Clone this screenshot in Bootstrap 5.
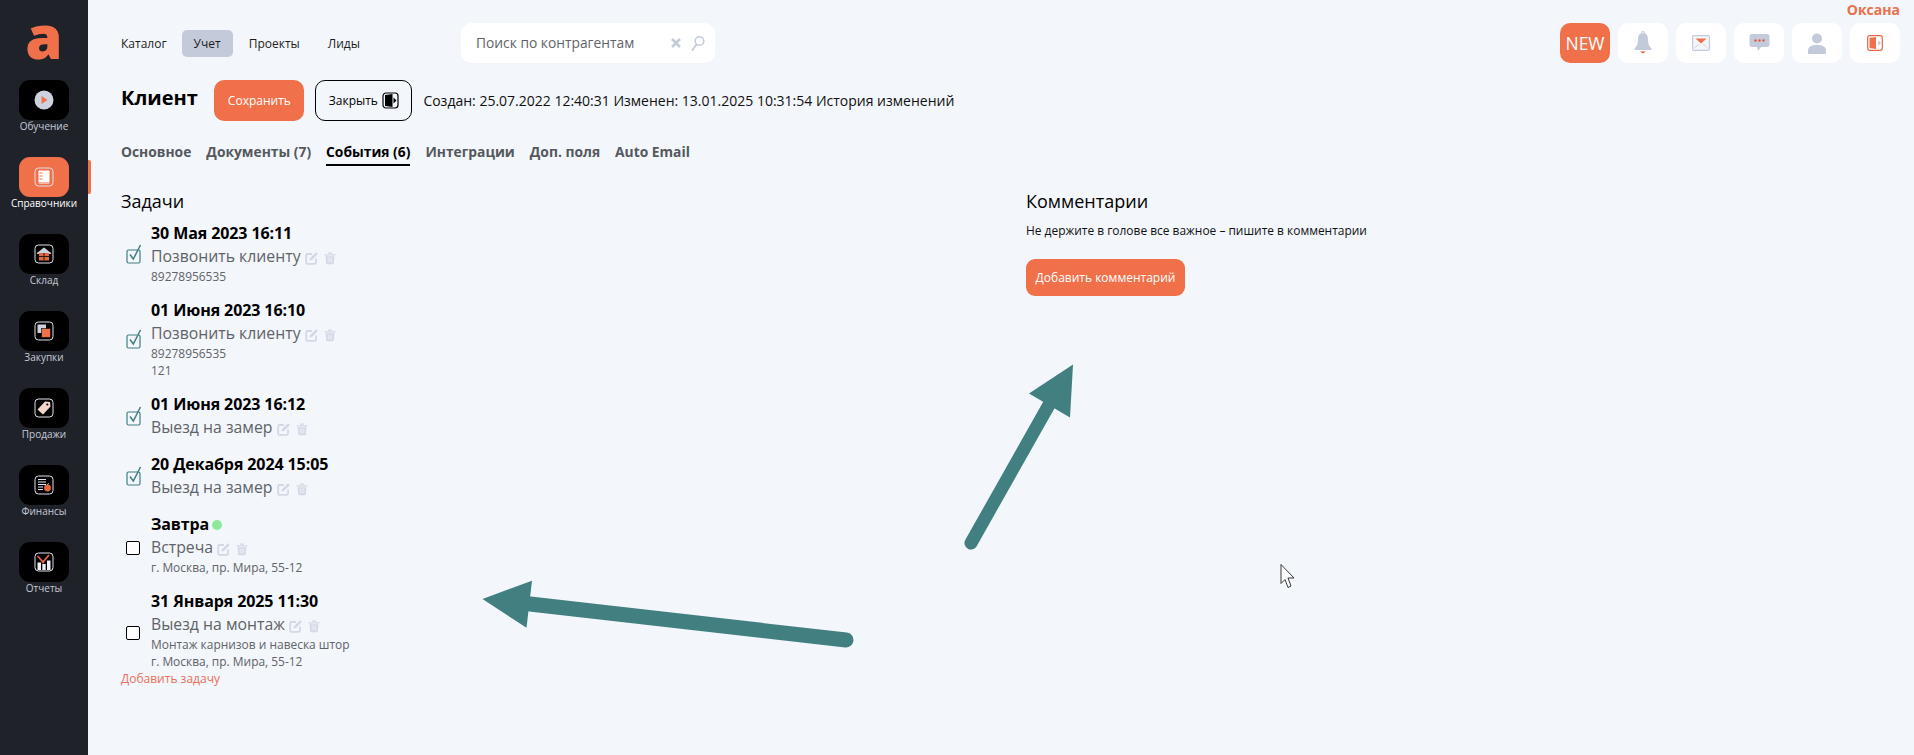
<!DOCTYPE html>
<html lang="ru">
<head>
  <meta charset="UTF-8" />
  <meta name="viewport" content="width=device-width, initial-scale=1" />
  <title>Клиент</title>
  <link href="https://cdn.jsdelivr.net/npm/bootstrap@5.3.0/dist/css/bootstrap.min.css" rel="stylesheet" />
  <style>
    body {
      background: #f3f6fb;
      font-family: "Open Sans", sans-serif;
      color: #000;
      min-height: 755px;
      overflow: hidden;
    }
    .side-bar {
      width: 88px;
      background: #20222a;
      flex-shrink: 0;
    }
    .logo-mark {
      height: 80px;
      color: #f0704a;
      font-size: 60px;
      font-weight: 800;
      line-height: 72px;
      text-align: center;
    }
    .side-item {
      height: 77px;
      color: #c4cad8;
      font-size: 10px;
      line-height: 13px;
      text-decoration: none;
      position: relative;
    }
    .side-tile {
      width: 50px;
      height: 40px;
      background: #000;
      border-radius: 11px;
      margin-bottom: 0;
    }
    .side-item.is-active { color: #fff; }
    .side-item.is-active .side-tile { background: #f0704a; }
    .side-item.is-active::after {
      content: "";
      position: absolute;
      left: 88px;
      top: 3px;
      width: 3px;
      height: 34px;
      background: #f0704a;
      border-radius: 0 2px 2px 0;
    }
    .content-area {
      padding: 0 14px 0 33px;
      min-width: 0;
    }
    .user-line {
      height: 23px;
      color: #e9704a;
      font-size: 14px;
      font-weight: 700;
      line-height: 20px;
      text-align: right;
    }
    .top-row { height: 40px; }
    .top-link {
      color: #1c1c1c;
      font-size: 12px;
      line-height: 27px;
      height: 27px;
      padding: 0 12px;
      border-radius: 5px;
      text-decoration: none;
    }
    .top-link.is-current { background: #c3cbdb; }
    .top-links {
      margin-left: -12px;
      gap: 4px;
    }
    .top-link:first-child { margin-right: -1px; }
    .search-box {
      width: 254px;
      height: 40px;
      margin-left: 89px;
      background: #fff;
      border-radius: 10px;
      padding: 0 10px 0 15px;
      color: #5f6368;
      font-size: 13.8px;
    }
    .tool-tile {
      width: 50px;
      height: 40px;
      background: #fff;
      border-radius: 10px;
    }
    .tool-new {
      background: #f0704a;
      color: #fff;
      font-size: 17.5px;
    }
    .title-row {
      margin-top: 17px;
      height: 41px;
    }
    .page-title {
      font-size: 20px;
      font-weight: 700;
      line-height: 36px;
      margin: 0 16.5px 5px 0;
    }
    .save-btn {
      background: #f0704a;
      color: #fff;
      border: 0;
      border-radius: 10px;
      font-size: 12px;
      font-weight: 500;
      height: 41px;
      width: 90px;
      padding: 0;
    }
    .close-btn {
      background: transparent;
      color: #000;
      border: 1px solid #000;
      border-radius: 10px;
      font-size: 12px;
      height: 41px;
      width: 97px;
      margin-left: 11px;
      padding: 0;
    }
    .meta-line {
      font-size: 14px;
      margin-left: 11px;
      color: #111;
    }
    .tab-row {
      margin-top: 21px;
      gap: 15px;
    }
    .tab-link {
      color: #55585d;
      font-size: 13.82px;
      font-weight: 700;
      line-height: 19px;
      padding-bottom: 3px;
      border-bottom: 2px solid transparent;
      text-decoration: none;
    }
    .tab-link.is-current {
      color: #000;
      border-bottom-color: #000;
    }
    .work-row { margin-top: 23px; }
    .task-col { width: 905px; }
    .block-title {
      font-size: 18px;
      font-weight: 400;
      line-height: 24px;
      margin: 0;
    }
    .task-list { margin-top: 9px; }
    .task-item {
      padding-left: 5px;
      margin-bottom: 14px;
      gap: 9px;
    }
    .task-item:last-of-type { margin-bottom: 0; }
    .task-check { width: 16px; flex-shrink: 0; }
    .task-box.form-check-input {
      width: 14px;
      height: 14px;
      margin: 6px 0 0;
      border: 1.5px solid #000;
      border-radius: 2px;
      background-color: #fff;
    }
    .task-date {
      font-size: 16px;
      font-weight: 700;
      line-height: 22px;
      letter-spacing: -.1px;
    }
    .task-name {
      color: #5f6368;
      font-size: 15.8px;
      line-height: 24px;
    }
    .task-note {
      color: #5f6368;
      font-size: 11.95px;
      line-height: 17px;
    }
    .green-dot {
      display: inline-block;
      width: 10px;
      height: 10px;
      margin-left: 3px;
      background: #8fe89a;
      border-radius: 50%;
    }
    .add-task {
      color: #e9705a;
      font-size: 12px;
      line-height: 17px;
      text-decoration: none;
    }
    .comment-hint {
      font-size: 11.95px;
      line-height: 17px;
      margin: 9px 0 0;
      color: #111;
    }
    .comment-btn {
      background: #f0704a;
      color: #fff;
      border: 0;
      border-radius: 9px;
      font-size: 12px;
      font-weight: 500;
      height: 37px;
      width: 159px;
      margin-top: 20px;
      padding: 0;
    }
    .overlay-art {
      position: absolute;
      left: 0;
      top: 0;
      pointer-events: none;
    }
  </style>
</head>
<body class="position-relative">

  <svg width="0" height="0" class="position-absolute">
    <symbol id="edit-ic" viewBox="0 0 14 14">
      <path d="M11 7.500V11.500a1.300 1.300 0 0 1-1.300 1.300H2.500a1.300 1.300 0 0 1-1.300-1.300V4.300A1.300 1.300 0 0 1 2.500 3H7" fill="none" stroke="#d3d8e5" stroke-width="1.800"/>
      <path d="M4.500 9.500l.5-2.300L11 1.200l1.900 1.900-6 6z" fill="#d3d8e5"/>
    </symbol>
    <symbol id="trash-ic" viewBox="0 0 14 14">
      <path d="M1.500 3.200h11v1.300h-11zM5 1.500h4v1.200H5z" fill="#d3d8e5"/>
      <path d="M2.600 5.200h8.800l-.6 7.100a1 1 0 0 1-1 .9H4.200a1 1 0 0 1-1-.9z" fill="#d3d8e5"/>
      <path d="M5.200 6.500v5M7 6.500v5M8.800 6.500v5" stroke="#f3f6fb" stroke-width=".8"/>
    </symbol>
    <symbol id="done-ic" viewBox="0 0 16 20">
      <rect x="1" y="6" width="13" height="13" rx="1.500" fill="none" stroke="#417f80" stroke-width="1.200"/>
      <path d="M4 10.500l3.300 4.500L14.500 1" fill="none" stroke="#417f80" stroke-width="1.500"/>
    </symbol>
    <symbol id="frame-ic" viewBox="0 0 20 20">
      <rect x="1" y="1" width="18" height="18" rx="3.500" fill="none" stroke="#dfe3ec" stroke-width="1"/>
    </symbol>
  </svg>

  <div class="d-flex">
    <aside class="side-bar d-flex flex-column align-items-center vh-100">
      <div class="logo-mark w-100">a</div>

      <a class="side-item w-100 d-flex flex-column align-items-center" href="#">
        <span class="side-tile d-flex align-items-center justify-content-center">
          <svg width="20" height="20" viewBox="0 0 20 20"><circle cx="10" cy="10" r="9.500" fill="#cdd2de"/><path d="M7.500 6l6 4-6 4z" fill="#f0704a"/></svg>
        </span>
        Обучение
      </a>
      <a class="side-item is-active w-100 d-flex flex-column align-items-center" href="#">
        <span class="side-tile d-flex align-items-center justify-content-center">
          <svg width="20" height="20" viewBox="0 0 20 20"><use href="#frame-ic"/><path d="M4.500 3.500h11v11.500h-11z" fill="#fff"/><path d="M4.500 15.500h11v1h-11z" fill="#fff"/><path d="M5.500 6h3M5.500 9h3M5.500 12h3" stroke="#f0704a" stroke-width="1"/></svg>
        </span>
        Справочники
      </a>
      <a class="side-item w-100 d-flex flex-column align-items-center" href="#">
        <span class="side-tile d-flex align-items-center justify-content-center">
          <svg width="20" height="20" viewBox="0 0 20 20"><use href="#frame-ic"/><path d="M3 9l7-5.500L17 9v1H3z" fill="#cdd2de"/><rect x="5" y="9" width="10" height="7.500" fill="#e5673f"/><path d="M10 9v7.500M5 12.500h10" stroke="#2a1a14" stroke-width="1"/></svg>
        </span>
        Склад
      </a>
      <a class="side-item w-100 d-flex flex-column align-items-center" href="#">
        <span class="side-tile d-flex align-items-center justify-content-center">
          <svg width="20" height="20" viewBox="0 0 20 20"><use href="#frame-ic"/><rect x="3.500" y="3.500" width="8.500" height="8.500" fill="#cdd2de"/><rect x="7.500" y="7.500" width="9" height="9" fill="#f0704a" stroke="#000" stroke-width=".6"/></svg>
        </span>
        Закупки
      </a>
      <a class="side-item w-100 d-flex flex-column align-items-center" href="#">
        <span class="side-tile d-flex align-items-center justify-content-center">
          <svg width="20" height="20" viewBox="0 0 20 20"><use href="#frame-ic"/><path d="M11 3.500l5 .5.5 4.500-7.500 8-5.500-5z" fill="#f4d6cb"/><circle cx="13.300" cy="6.500" r="1.100" fill="#000"/></svg>
        </span>
        Продажи
      </a>
      <a class="side-item w-100 d-flex flex-column align-items-center" href="#">
        <span class="side-tile d-flex align-items-center justify-content-center">
          <svg width="20" height="20" viewBox="0 0 20 20"><use href="#frame-ic"/><path d="M4 4.500h8M4 7h8M4 9.500h8M4 12h5M4 14.500h5" stroke="#dfe3ec" stroke-width="1.200"/><circle cx="13.500" cy="13" r="3.400" fill="#e5673f"/><path d="M13.500 9.800l1-1.500" stroke="#dfe3ec" stroke-width="1"/></svg>
        </span>
        Финансы
      </a>
      <a class="side-item w-100 d-flex flex-column align-items-center" href="#">
        <span class="side-tile d-flex align-items-center justify-content-center">
          <svg width="20" height="20" viewBox="0 0 20 20"><use href="#frame-ic"/><path d="M3.500 10.500h3.500V18H3.500zM8.300 12h3.400v6H8.300zM13 8.500h3.500V18H13z" fill="#eef0f5"/><path d="M3.500 4l5.500 6 6-7" fill="none" stroke="#e5673f" stroke-width="1.800"/><circle cx="9" cy="10" r="1.400" fill="#e5673f"/></svg>
        </span>
        Отчеты
      </a>
    </aside>

    <main class="content-area flex-grow-1">
      <div class="user-line">Оксана</div>

      <div class="top-row d-flex align-items-center justify-content-between">
        <div class="d-flex align-items-center">
          <nav class="top-links d-flex">
            <a class="top-link" href="#">Каталог</a>
            <a class="top-link is-current" href="#">Учет</a>
            <a class="top-link" href="#">Проекты</a>
            <a class="top-link" href="#">Лиды</a>
          </nav>
          <div class="search-box d-flex align-items-center">
            <span class="flex-grow-1">Поиск по контрагентам</span>
            <svg width="12" height="12" viewBox="0 0 12 12" class="me-2"><path d="M2 2l8 8M10 2l-8 8" stroke="#c3cbdb" stroke-width="2.600"/></svg>
            <svg width="15" height="17" viewBox="0 0 15 17"><circle cx="9.500" cy="6" r="4.300" fill="none" stroke="#c3cbdb" stroke-width="1.600"/><path d="M6.500 9.500L2 15.500" stroke="#c3cbdb" stroke-width="1.800"/></svg>
          </div>
        </div>

        <div class="d-flex gap-2">
          <div class="tool-tile tool-new d-flex align-items-center justify-content-center">NEW</div>
          <div class="tool-tile d-flex align-items-center justify-content-center">
            <svg width="20" height="26" viewBox="0 0 20 26"><path d="M8.500 3a1.500 1.500 0 0 1 3 0" fill="none" stroke="#c3cbdb" stroke-width="1.200"/><path d="M10 3c3.600 0 5 2.800 5 6 0 5 1.200 7 3.500 9.500v1.500h-17v-1.500C3.800 16 5 14 5 9c0-3.200 1.400-6 5-6z" fill="#c3cbdb"/><path d="M7 21.500h6L10 23.500z" fill="#e5573f"/></svg>
          </div>
          <div class="tool-tile d-flex align-items-center justify-content-center">
            <svg width="18" height="16" viewBox="0 0 18 16"><rect x=".6" y=".6" width="16.800" height="14.800" rx="1.500" fill="#f5f6f9" stroke="#c3cbdb" stroke-width="1.200"/><path d="M3.500 3.500h11L9 8.500z" fill="#f0704a"/><path d="M2.500 13l4.500-4M15.500 13l-4.500-4" stroke="#c3cbdb" stroke-width=".8"/></svg>
          </div>
          <div class="tool-tile d-flex align-items-center justify-content-center">
            <svg width="21" height="20" viewBox="0 0 21 20"><path d="M3 1h15a2.500 2.500 0 0 1 2.500 2.500v8A2.500 2.500 0 0 1 18 14h-6l-3 4-1-4H3A2.500 2.500 0 0 1 .5 11.500v-8A2.500 2.500 0 0 1 3 1z" fill="#c3cbdb"/><circle cx="6.500" cy="7.500" r="1.200" fill="#e5573f"/><circle cx="10.500" cy="7.500" r="1.200" fill="#e5573f"/><circle cx="14.500" cy="7.500" r="1.200" fill="#e5573f"/></svg>
          </div>
          <div class="tool-tile d-flex align-items-center justify-content-center">
            <svg width="18" height="21" viewBox="0 0 18 21"><circle cx="9" cy="5.500" r="5" fill="#c3cbdb"/><path d="M0 21v-3.500C0 14 3 12 9 12s9 2 9 5.500V21z" fill="#c3cbdb"/></svg>
          </div>
          <div class="tool-tile d-flex align-items-center justify-content-center">
            <svg width="16" height="16" viewBox="0 0 16 16"><rect x=".7" y=".7" width="14.600" height="14.600" rx="2" fill="none" stroke="#e5673f" stroke-width="1.200"/><path d="M2.500 3l6.500-1v12l-6.500-1z" fill="#f0704a"/><path d="M11 5l3 3-3 3z" fill="#c3cbdb"/></svg>
          </div>
        </div>
      </div>

      <div class="title-row d-flex align-items-center">
        <h1 class="page-title">Клиент</h1>
        <button class="save-btn" type="button">Сохранить</button>
        <button class="close-btn d-inline-flex align-items-center justify-content-center gap-1" type="button">
          Закрыть
          <svg width="17" height="17" viewBox="0 0 17 17"><rect x="1" y="1" width="15" height="15" rx="3" fill="none" stroke="#000" stroke-width="1.200"/><path d="M3 3l7.500-1v13L3 14z" fill="#000"/><path d="M11.500 5.500l3 3-3 3z" fill="#000"/></svg>
        </button>
        <div class="meta-line">Создан: 25.07.2022 12:40:31 Изменен: 13.01.2025 10:31:54 История изменений</div>
      </div>

      <div class="tab-row d-flex">
        <a class="tab-link" href="#">Основное</a>
        <a class="tab-link" href="#">Документы (7)</a>
        <a class="tab-link is-current" href="#">События (6)</a>
        <a class="tab-link" href="#">Интеграции</a>
        <a class="tab-link" href="#">Доп. поля</a>
        <a class="tab-link" href="#">Auto Email</a>
      </div>

      <div class="work-row d-flex">
        <section class="task-col">
          <h2 class="block-title">Задачи</h2>
          <div class="task-list">
            <div class="task-item d-flex align-items-center">
              <span class="task-check"><svg width="16" height="20" class="d-block"><use href="#done-ic"/></svg></span>
              <div>
                <div class="task-date">30 Мая 2023 16:11</div>
                <div class="task-name">Позвонить клиенту <svg width="14" height="14"><use href="#edit-ic"/></svg> <svg width="14" height="14"><use href="#trash-ic"/></svg></div>
                <div class="task-note">89278956535</div>
              </div>
            </div>
            <div class="task-item d-flex align-items-center">
              <span class="task-check"><svg width="16" height="20" class="d-block"><use href="#done-ic"/></svg></span>
              <div>
                <div class="task-date">01 Июня 2023 16:10</div>
                <div class="task-name">Позвонить клиенту <svg width="14" height="14"><use href="#edit-ic"/></svg> <svg width="14" height="14"><use href="#trash-ic"/></svg></div>
                <div class="task-note">89278956535</div>
                <div class="task-note">121</div>
              </div>
            </div>
            <div class="task-item d-flex align-items-center">
              <span class="task-check"><svg width="16" height="20" class="d-block"><use href="#done-ic"/></svg></span>
              <div>
                <div class="task-date">01 Июня 2023 16:12</div>
                <div class="task-name">Выезд на замер <svg width="14" height="14"><use href="#edit-ic"/></svg> <svg width="14" height="14"><use href="#trash-ic"/></svg></div>
              </div>
            </div>
            <div class="task-item d-flex align-items-center">
              <span class="task-check"><svg width="16" height="20" class="d-block"><use href="#done-ic"/></svg></span>
              <div>
                <div class="task-date">20 Декабря 2024 15:05</div>
                <div class="task-name">Выезд на замер <svg width="14" height="14"><use href="#edit-ic"/></svg> <svg width="14" height="14"><use href="#trash-ic"/></svg></div>
              </div>
            </div>
            <div class="task-item d-flex align-items-center">
              <span class="task-check"><input class="task-box form-check-input d-block" type="checkbox" /></span>
              <div>
                <div class="task-date">Завтра<span class="green-dot"></span></div>
                <div class="task-name">Встреча <svg width="14" height="14"><use href="#edit-ic"/></svg> <svg width="14" height="14"><use href="#trash-ic"/></svg></div>
                <div class="task-note">г. Москва, пр. Мира, 55-12</div>
              </div>
            </div>
            <div class="task-item d-flex align-items-center">
              <span class="task-check"><input class="task-box form-check-input d-block" type="checkbox" /></span>
              <div>
                <div class="task-date">31 Января 2025 11:30</div>
                <div class="task-name">Выезд на монтаж <svg width="14" height="14"><use href="#edit-ic"/></svg> <svg width="14" height="14"><use href="#trash-ic"/></svg></div>
                <div class="task-note">Монтаж карнизов и навеска штор</div>
                <div class="task-note">г. Москва, пр. Мира, 55-12</div>
              </div>
            </div>
            <a class="add-task d-block" href="#">Добавить задачу</a>
          </div>
        </section>

        <section>
          <h2 class="block-title">Комментарии</h2>
          <p class="comment-hint">Не держите в голове все важное – пишите в комментарии</p>
          <button class="comment-btn" type="button">Добавить комментарий</button>
        </section>
      </div>
    </main>
  </div>

  <!-- hand-drawn arrows and the mouse pointer sit on top of the page -->
  <svg class="overlay-art" width="1914" height="755" viewBox="0 0 1914 755">
    <path d="M846 640L530 604" stroke="#417f80" stroke-width="15" stroke-linecap="round" fill="none"/>
    <path d="M482.500 599L532 580.700 526.500 627.700z" fill="#417f80"/>
    <path d="M971 543L1050 403" stroke="#417f80" stroke-width="13" stroke-linecap="round" fill="none"/>
    <path d="M1073 364.500L1029 393.500 1070 417.500z" fill="#417f80"/>
    <path d="M1281 564.500v19l4-4 3 8 3-1.500-3-8h6z" fill="#fff" stroke="#222" stroke-width=".9"/>
  </svg>

</body>
</html>
